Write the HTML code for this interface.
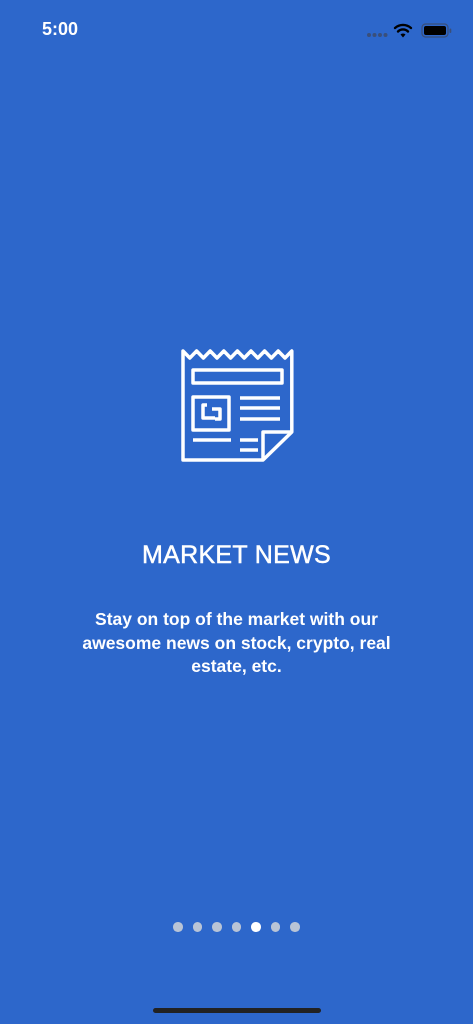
<!DOCTYPE html>
<html><head><style>
html,body{margin:0;padding:0}
body{width:473px;height:1024px;background:#2d67cb;position:relative;overflow:hidden;font-family:"Liberation Sans",sans-serif;color:#fff}
.time{position:absolute;left:42px;top:19px;font-size:18px;font-weight:bold}
h1{position:absolute;top:541px;left:0;width:473px;text-align:center;margin:0;font-size:25px;font-weight:normal;letter-spacing:0.3px;-webkit-text-stroke:0.5px #fff}
p{position:absolute;top:608px;left:60px;width:353px;text-align:center;margin:0;font-size:17.5px;line-height:23.5px;font-weight:bold}
.dots{position:absolute;top:922px;left:173px;display:flex;gap:10px}
.dots span{width:9.5px;height:9.5px;border-radius:50%;background:#b9c4d6}
.dots span.a{background:#fff}
.home{position:absolute;left:153px;top:1008px;width:168px;height:5px;border-radius:3px;background:#222}
</style></head><body>
<div class="time">5:00</div>
<svg style="position:absolute;left:366px;top:20px" width="90" height="20" viewBox="0 0 90 20">
<g fill="#3a4f7a"><circle cx="3" cy="15" r="2"/><circle cx="8.5" cy="15" r="2"/><circle cx="14" cy="15" r="2"/><circle cx="19.5" cy="15" r="2"/></g>
<g fill="none" stroke="#000" stroke-width="2.4" stroke-linecap="round"><path d="M29 8a12 12 0 0 1 16 0"/><path d="M32 11.5a7 7 0 0 1 10 0"/></g>
<path d="M34.5 14.5l2.5 3l2.5-3a3.5 3.5 0 0 0-5 0z" fill="#000"/>
<rect x="56" y="4" width="26" height="13" rx="3.5" fill="none" stroke="#3a4f7a" stroke-width="1.2"/>
<rect x="58" y="6" width="22" height="9" rx="2" fill="#000"/>
<rect x="83.5" y="8.5" width="1.8" height="4.5" rx="1" fill="#3a4f7a"/>
</svg>
<svg style="position:absolute;left:170px;top:340px" width="135" height="130" viewBox="170 340 135 130" fill="none" stroke="#fff" stroke-width="3.5" stroke-linejoin="round">
<path d="M183 351 l6.8 7 l6.8-7 l6.8 7 l6.8-7 l6.8 7 l6.8-7 l6.8 7 l6.8-7 l6.8 7 l6.8-7 l6.8 7 l6.8-7 l6.8 7 l6.8-7 l6.8 7 l6.8-7 V432 L263 460 H183 Z"/>
<path d="M292 432 H263 V460"/>
<rect x="193" y="370" width="89" height="13"/>
<rect x="193" y="397" width="36" height="33"/>
<path d="M207 405 h-4 v13 h12 M212 409 h8 v10 h-5"/>
<path d="M240 398 h40 M240 408 h40 M240 419 h40 M240 440 h18 M240 450 h18 M193 440 h38"/>
</svg>
<h1>MARKET NEWS</h1>
<p>Stay on top of the market with our awesome news on stock, crypto, real estate, etc.</p>
<div class="dots"><span></span><span></span><span></span><span></span><span class="a"></span><span></span><span></span></div>
<div class="home"></div>
</body></html>
